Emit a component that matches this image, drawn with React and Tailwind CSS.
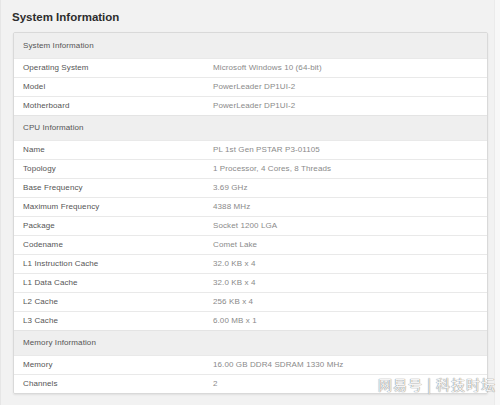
import React from 'react';

const sections = [
  {
    title: 'System Information',
    rows: [
      ['Operating System', 'Microsoft Windows 10 (64-bit)'],
      ['Model', 'PowerLeader DP1UI-2'],
      ['Motherboard', 'PowerLeader DP1UI-2'],
    ],
  },
  {
    title: 'CPU Information',
    rows: [
      ['Name', 'PL 1st Gen PSTAR P3-01105'],
      ['Topology', '1 Processor, 4 Cores, 8 Threads'],
      ['Base Frequency', '3.69 GHz'],
      ['Maximum Frequency', '4388 MHz'],
      ['Package', 'Socket 1200 LGA'],
      ['Codename', 'Comet Lake'],
      ['L1 Instruction Cache', '32.0 KB x 4'],
      ['L1 Data Cache', '32.0 KB x 4'],
      ['L2 Cache', '256 KB x 4'],
      ['L3 Cache', '6.00 MB x 1'],
    ],
  },
  {
    title: 'Memory Information',
    rows: [
      ['Memory', '16.00 GB DDR4 SDRAM 1330 MHz'],
      ['Channels', '2'],
    ],
  },
];

const SectionHeader = ({ title }) => (
  <div className="h-[25px] flex items-center pl-[9px] bg-[#efefef] text-[#555] border-t border-[#e4e4e4] first:border-t-0">
    {title}
  </div>
);

const Row = ({ label, value }) => (
  <div className="h-[19px] flex items-center bg-white border-t border-[#e9e9e9]">
    <div className="w-[199px] pl-[9px] text-[#555]">{label}</div>
    <div className="text-[#8a8a8a]">{value}</div>
  </div>
);

export default function App() {
  return (
    <div className="relative w-[500px] h-[405px] bg-[#f2f2f2] font-['Liberation_Sans',Arial,sans-serif] border-l border-[#e6e6e6] overflow-hidden">
      <div className="absolute right-0 top-0 w-[6px] h-full bg-[#f8f8f8] border-l border-[#ebebeb]" />
      <h1 className="pl-[11px] pt-[9px] h-[32px] text-[11.5px] font-bold text-[#2d2d2d]">
        System Information
      </h1>
      <div className="ml-[12px] w-[475px] border border-[#d9d9d9] rounded-[2px] shadow-[0_1px_2px_rgba(0,0,0,0.08)] overflow-hidden text-[8px] tracking-[0.1px]">
        {sections.map((s) => (
          <React.Fragment key={s.title}>
            <SectionHeader title={s.title} />
            {s.rows.map(([l, v]) => (
              <Row key={l} label={l} value={v} />
            ))}
          </React.Fragment>
        ))}
      </div>
      <div className="absolute left-[377px] top-[374px] text-[14px] tracking-[1px] text-[#f4f4f4] font-['Noto_Sans_CJK_SC',sans-serif] [text-shadow:0_0_1px_#888,0_0_1px_#888]">
        网易号 | 科技时坛
      </div>
    </div>
  );
}
